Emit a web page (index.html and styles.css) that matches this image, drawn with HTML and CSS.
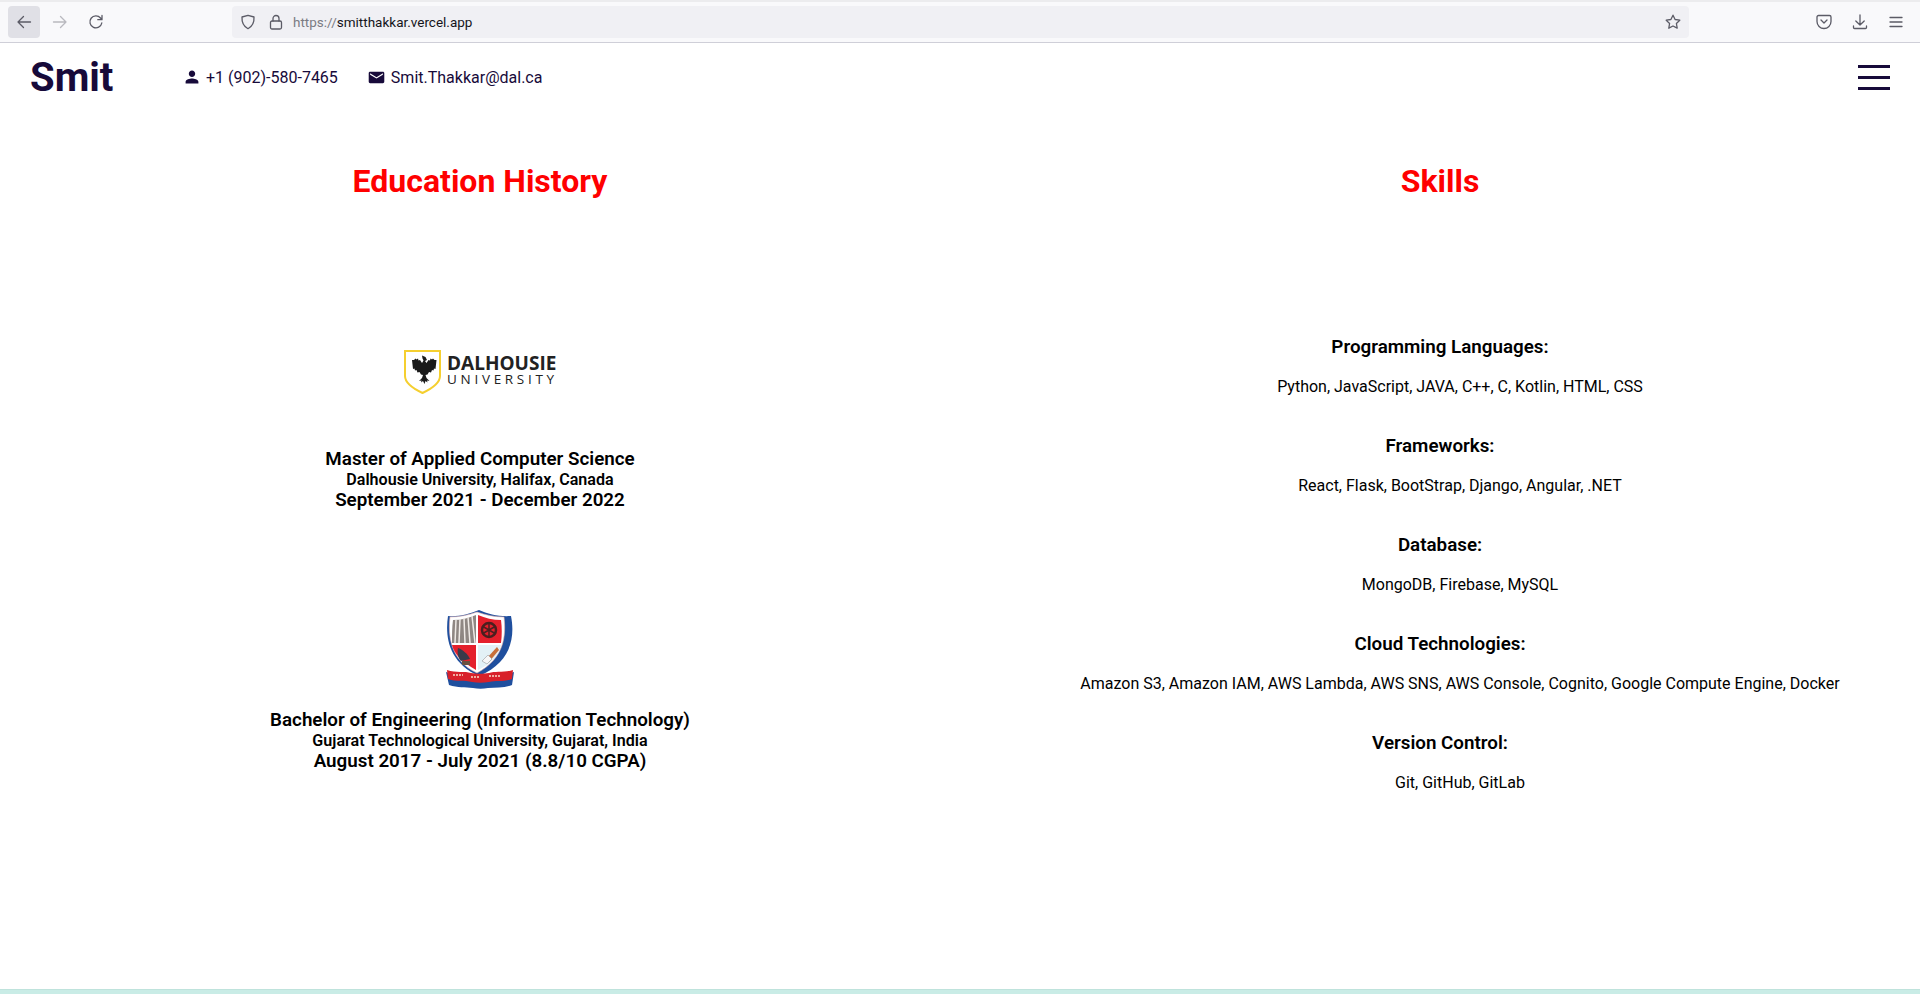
FILE: index.html
```html
<!DOCTYPE html>
<html lang="en">
<head>
    <meta charset="UTF-8">
    <meta name="viewport" content="width=device-width, initial-scale=1.0">
    <title>Smit Thakkar</title>
    <link rel="stylesheet" href="styles.css">
</head>
<body>
    <!-- Browser toolbar -->
    <div class="toolbar">
        <div class="tool-btn tool-btn-active">
            <svg width="16" height="16" viewBox="0 0 16 16" class="icon-stroke"><path d="M14.500 8H2M7.500 2.500 2 8l5.500 5.500"/></svg>
        </div>
        <div class="tool-btn tool-btn-off">
            <svg width="16" height="16" viewBox="0 0 16 16" class="icon-stroke"><path d="M1.500 8H14M8.500 2.500 14 8l-5.500 5.500"/></svg>
        </div>
        <div class="tool-btn">
            <svg width="16" height="16" viewBox="0 0 16 16" class="icon-stroke"><path d="M13.800 9A6 6 0 1 1 12.500 4l1.300 1.500M14 1.500v4.200H9.800"/></svg>
        </div>
        <div class="urlbar">
            <svg width="16" height="16" viewBox="0 0 16 16" class="icon-stroke urlbar-shield"><path d="M8 1.300 14 3c.3 5-1 9-6 11.700C3 12 1.700 8 2 3z"/></svg>
            <svg width="16" height="16" viewBox="0 0 16 16" class="icon-stroke urlbar-lock"><rect x="2.500" y="7" width="11" height="8" rx="1.500"/><path d="M5 7V4.500a3 3 0 0 1 6 0V7"/></svg>
            <span class="url"><span class="url-dim">https://</span>smitthakkar.vercel.app</span>
            <svg width="16" height="16" viewBox="0 0 16 16" class="icon-stroke urlbar-star"><path d="m8 1.200 2.100 4.300 4.700.7-3.400 3.300.8 4.700L8 12l-4.200 2.200.8-4.700L1.200 6.200l4.700-.7z"/></svg>
        </div>
        <div class="toolbar-right">
            <svg width="16" height="16" viewBox="0 0 16 16" class="icon-stroke"><path d="M2.500 1.500h11A1.500 1.500 0 0 1 15 3v4.500a7 7 0 0 1-14 0V3a1.500 1.500 0 0 1 1.500-1.500z"/><path d="m5 6 3 3 3-3"/></svg>
            <svg width="16" height="16" viewBox="0 0 16 16" class="icon-stroke"><path d="M8 1v10M3.800 7 8 11l4.200-4M1.500 12v1.500a1 1 0 0 0 1 1h11a1 1 0 0 0 1-1V12"/></svg>
            <svg width="16" height="16" viewBox="0 0 16 16" class="icon-stroke"><path d="M2 3.500h12M2 8h12M2 12.500h12"/></svg>
        </div>
    </div>

    <header class="nav">
        <a class="brand" href="#">Smit</a>
        <div class="contact">
            <svg width="16" height="16" viewBox="0 0 24 24" class="icon-fill"><path d="M12 12c2.700 0 4.800-2.100 4.800-4.800S14.700 2.400 12 2.400 7.200 4.500 7.200 7.200 9.300 12 12 12zm0 2.400c-3.200 0-9.600 1.600-9.600 4.800v2.400h19.200v-2.400c0-3.200-6.400-4.800-9.600-4.800z"/></svg>
            <span>+1 (902)-580-7465</span>
        </div>
        <div class="contact">
            <svg width="17" height="17" viewBox="0 0 24 24" class="icon-fill"><path d="M21 4H3C1.900 4 1 4.900 1 6v12c0 1.100.9 2 2 2h18c1.100 0 2-.9 2-2V6c0-1.100-.9-2-2-2zm0 4-9 5.500L3 8V6l9 5.500L21 6z"/></svg>
            <span>Smit.Thakkar@dal.ca</span>
        </div>
        <div class="burger"><span></span><span></span><span></span></div>
    </header>

    <main class="columns">
        <section class="col">
            <h2>Education History</h2>
            <div class="school school-dal">
                <svg class="logo" width="154" height="46" viewBox="0 0 154 46">
                    <path d="M2 2h35v25c0 7-9 13-17.500 17C11 40 2 34 2 27z" fill="#fff" stroke="#f5cf2f" stroke-width="2"/>
                    <!-- eagle: head, spread wings with feather notches, tail -->
                    <path d="M19 6.500l3.500 1.500 1.500 3-2 1 1.500 2 2-3 1.500 .5 .5-2 1.500 1 1-1 1.500 1.500 2 0-1 9-1.500-.5-.5 2-1.500-.5-1 2.500-2-.5-1.500 2.500-2 .5 1 3 3 3-2.500-.5 .5 2-2-1.500-1 3-1.500-3-2 1.500 .5-2-2.500 .5 3-3 1-3-2-.5-1.500-2.500-2 .5-1-2.500-1.500 .5-.5-2-1.500 .5-1-9 2 0 1.500-1.500 1 1 1.500-1 .5 2 1.500-.5 2 3 1.500-2.500-1-2z" fill="#1a1a1a"/>
                    <text x="44" y="21" class="dal-top">DALHOUSIE</text>
                    <text x="44" y="35" class="dal-bottom">UNIVERSITY</text>
                </svg>
                <h3>Master of Applied Computer Science</h3>
                <h4>Dalhousie University, Halifax, Canada</h4>
                <h3>September 2021 - December 2022</h3>
            </div>
            <div class="school school-gtu">
                <svg class="logo" width="72" height="80" viewBox="0 0 72 80">
                    <path d="M4 7c10 1 21-2 31-6 9 4 21 7 32 6 4 20 1 46-32 60C4 53 1 27 4 7z" fill="#1f4f9e"/>
                    <path d="M6 8c9 0 19-2 27-5 8 3 18 5 27 5 2 18 1 41-27 56C6 51 4 27 6 8z" fill="#fff" stroke="#e9b5ae" stroke-width=".6"/>
                    <path d="M9 11c8 0 16-2 23-5v28H8c0-8 0-16 1-23z" fill="#8f8783"/>
                    <path d="M12 11l-1 23M16 10l-1 24M20 9l1 25M24 8l2 26M28 7l3 27" stroke="#efeae6" stroke-width="1.500" fill="none"/>
                    <path d="M34 6c7 3 15 5 23 5 1 8 1 15 0 23H34z" fill="#e4202c"/>
                    <path d="M8 36h24v25C18 53 10 45 8 36z" fill="#e4202c"/>
                    <path d="M34 36h23c-2 10-10 19-23 25z" fill="#e3f1f6"/>
                    <circle cx="45" cy="21" r="7" fill="none" stroke="#4a1f1f" stroke-width="2.500"/>
                    <path d="M38 17l14 8M52 17l-14 8M45 13v16" stroke="#4a1f1f" stroke-width="1.500"/>
                    <path d="M14 39c5 2 10 6 12 11l-9 2c-3-3-4-8-3-13z" fill="#3a3a4a"/>
                    <path d="M18 52h8v4h-8z" fill="#6b5040"/>
                    <path d="m53 38-10 11 2 4 10-12z" fill="#c8703a"/>
                    <path d="m44 46-6 6 5 3 5-5z" fill="#f7f7f7" stroke="#8a8a8a" stroke-width=".5"/>
                    <path d="M2 63c9 4 18 1 25 4 4 1 14 1 18 0 7-3 16 0 25-4l-2 13c-8 3-16 2-24 3-5 1-10 1-15 0-8-1-15 0-24-3z" fill="#1f4f9e"/>
                    <path d="M3 61c9 3 18 1 24 3 5 1 13 1 18 0 6-2 15 0 24-3l-1 9c-8 3-16 1-23 3-6 1-11 1-17 0-7-2-15 0-24-3z" fill="#d8202a"/>
                    <path d="M9 66h10M27 68h9M45 67h11" stroke="#f6d9c8" stroke-width="1.500" stroke-dasharray="2 1"/>
                </svg>
                <h3>Bachelor of Engineering (Information Technology)</h3>
                <h4>Gujarat Technological University, Gujarat, India</h4>
                <h3>August 2017 - July 2021 (8.8/10 CGPA)</h3>
            </div>
        </section>
        <section class="col">
            <h2>Skills</h2>
            <div class="skills">
                <h3>Programming Languages:</h3>
                <p>Python, JavaScript, JAVA, C++, C, Kotlin, HTML, CSS</p>
                <h3>Frameworks:</h3>
                <p>React, Flask, BootStrap, Django, Angular, .NET</p>
                <h3>Database:</h3>
                <p>MongoDB, Firebase, MySQL</p>
                <h3>Cloud Technologies:</h3>
                <p>Amazon S3, Amazon IAM, AWS Lambda, AWS SNS, AWS Console, Cognito, Google Compute Engine, Docker</p>
                <h3>Version Control:</h3>
                <p>Git, GitHub, GitLab</p>
            </div>
        </section>
    </main>

    <footer class="strip"></footer>
</body>
</html>
```

FILE: styles.css
```css
html, body {
    height: 100%;
}
body {
    margin: 0;
    padding: 0;
    background-color: #fff;
    color: #000;
    font-family: Roboto, Arial, sans-serif;
    display: flex;
    flex-direction: column;
    overflow: hidden;
}

/* browser toolbar */
.toolbar {
    height: 40px;
    flex: none;
    background-color: #f9f9fb;
    border-top: 2px solid #ececee;
    border-bottom: 1px solid #cfcfd8;
    box-sizing: content-box;
    display: flex;
    align-items: center;
    padding-left: 8px;
}
.tool-btn {
    width: 32px;
    height: 32px;
    margin-right: 4px;
    border-radius: 4px;
    display: flex;
    align-items: center;
    justify-content: center;
}
.tool-btn-active {
    background-color: #e0e0e6;
}
.tool-btn-off svg {
    opacity: 0.4;
}
.icon-stroke {
    fill: none;
    stroke: #5b5b66;
    stroke-width: 1.3;
    stroke-linecap: round;
    stroke-linejoin: round;
    flex: none;
}
.icon-fill {
    fill: #170a3a;
    flex: none;
}
.urlbar {
    width: 1457px;
    height: 32px;
    margin-left: 116px;
    border-radius: 4px;
    background-color: #f0f0f4;
    display: flex;
    align-items: center;
    padding: 0 8px 0 8px;
    box-sizing: border-box;
}
.urlbar-lock {
    margin-left: 12px;
}
.url {
    margin-left: 9px;
    font-size: 13.500px;
    color: #15141a;
    font-family: Roboto, Arial, sans-serif;
    flex: 1;
}
.url-dim {
    color: #7b7b83;
}
.toolbar-right {
    display: flex;
    gap: 20px;
    margin-left: 127px;
}

/* site nav */
.nav {
    flex: none;
    height: 68px;
    display: flex;
    align-items: center;
    padding: 0 30px;
    color: #170a3a;
}
.brand {
    font-size: 40px;
    font-weight: 700;
    color: #170a3a;
    text-decoration: none;
    width: 154px;
}
.contact {
    display: flex;
    align-items: center;
    gap: 6px;
    font-size: 16px;
    margin-right: 30px;
}
.burger {
    margin-left: auto;
    width: 32px;
    display: flex;
    flex-direction: column;
    gap: 8px;
}
.burger span {
    display: block;
    height: 3px;
    background-color: #170a3a;
}

/* main columns */
.columns {
    flex: 1;
    display: grid;
    grid-template-columns: 1fr 1fr;
    text-align: center;
}
.col h2 {
    margin: 51px 0 0;
    font-size: 32px;
    line-height: 38px;
    font-weight: 700;
    color: #f00;
}
.col h3 {
    margin: 0;
    font-size: 18.800px;
    line-height: 21px;
    font-weight: 600;
}
.col h4 {
    margin: 0;
    font-size: 16.100px;
    line-height: 20px;
    font-weight: 600;
}
.logo {
    display: block;
    margin: 0 auto;
}
.school-dal {
    margin-top: 149px;
}
.school-dal .logo {
    margin-bottom: 54px;
}
.school-gtu {
    margin-top: 98px;
}
.school-gtu .logo {
    margin-bottom: 21px;
}
.dal-top {
    font-family: "Open Sans", Arial, sans-serif;
    font-size: 19px;
    font-weight: 700;
    fill: #222;
}
.dal-bottom {
    font-family: "Open Sans", Arial, sans-serif;
    font-size: 13.500px;
    letter-spacing: 3.700px;
    fill: #222;
}

.skills {
    margin-top: 136px;
}
.skills h3 {
    line-height: 22px;
    margin-bottom: 17px;
}
.skills p {
    margin: 0 0 37px;
    padding-left: 40px;
    font-size: 16px;
    line-height: 23px;
}

.strip {
    flex: none;
    height: 4px;
    background-color: #c9ece6;
    border-top: 1px solid #bfe3dc;
}
```
